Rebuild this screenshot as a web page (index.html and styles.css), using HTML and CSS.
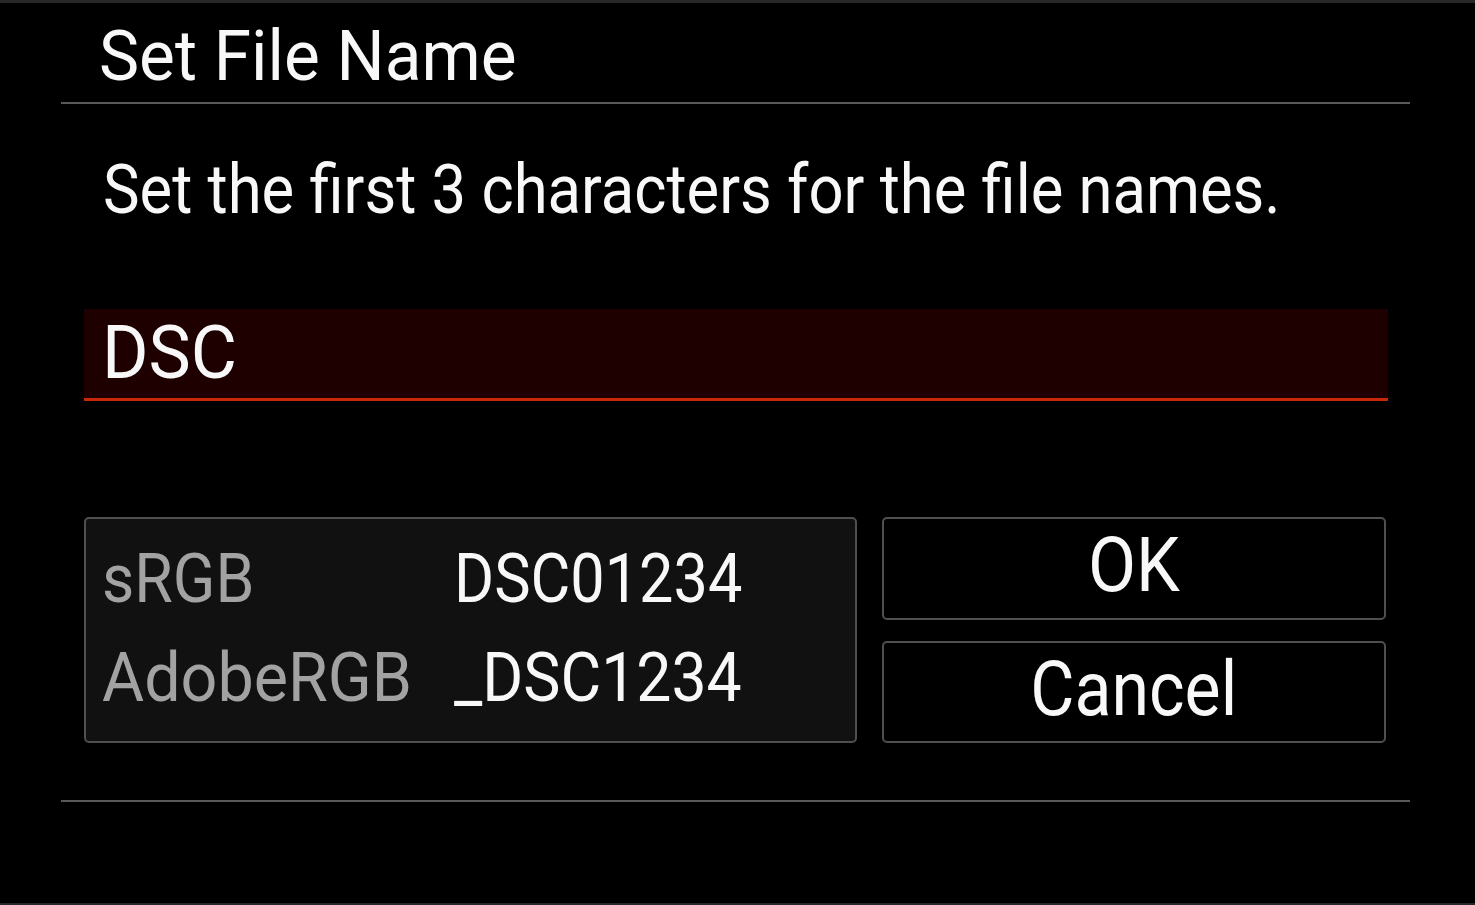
FILE: index.html
```html
<!DOCTYPE html>
<html lang="en">
<head>
<meta charset="utf-8">
<title>Set File Name</title>
<link rel="stylesheet" href="styles.css">
</head>
<body>
<div class="screen">
  <header class="header">
    <h1 class="title"><span class="cx">Set File Name</span></h1>
  </header>
  <p class="prompt"><span class="cx">Set the first 3 characters for the file names.</span></p>
  <div class="field"><span class="cx">DSC</span></div>
  <div class="row">
    <div class="info">
      <div class="label"><span class="cx">sRGB</span></div>
      <div class="value"><span class="cx num">DSC01234</span></div>
      <div class="label"><span class="cx wide">AdobeRGB</span></div>
      <div class="value"><span class="cx">_DSC1234</span></div>
    </div>
    <div class="buttons">
      <button class="btn"><span class="cc">OK</span></button>
      <button class="btn"><span class="cc narrow">Cancel</span></button>
    </div>
  </div>
  <div class="footer-rule"></div>
</div>
</body>
</html>
```
FILE: styles.css
```css
html, body {
  margin: 0;
  padding: 0;
  background: #000;
}
body {
  width: 1475px;
  height: 905px;
  overflow: hidden;
  font-family: Roboto, "Liberation Sans", sans-serif;
  color: #f8f8f8;
}
.screen {
  box-sizing: border-box;
  height: 905px;
  border-top: 3px solid #282828;
  border-bottom: 2px solid #282828;
  padding: 0 65px 0 61px;
  display: flex;
  flex-direction: column;
}
.cx {
  display: inline-block;
  transform: scaleX(0.92);
  transform-origin: left center;
  white-space: nowrap;
}
.cc {
  display: inline-block;
  transform: scaleX(0.92);
  transform-origin: center center;
  white-space: nowrap;
}
.header {
  padding: 18px 0 11px 38px;
  border-bottom: 2px solid #595959;
}
.title {
  margin: 0;
  font-size: 70px;
  line-height: 70px;
  font-weight: 400;
}
.title .cx {
  transform: scaleX(0.965);
}
.prompt {
  margin: 52px 0 0 0;
  padding-left: 42px;
  font-size: 68px;
  line-height: 68px;
}
.prompt .cx {
  transform: scaleX(0.905);
}
.field {
  margin: 85px 22px 0 23px;
  background: #1f0000;
  border-bottom: 3px solid #c8280a;
  padding: 7px 0 8px 18px;
  font-size: 74px;
  line-height: 74px;
}
.field .cx {
  transform: scaleX(0.96);
}
.row {
  margin: 116px 24px 0 23px;
  display: flex;
  gap: 25px;
  height: 226px;
}
.info {
  box-sizing: border-box;
  width: 773px;
  background: #111;
  border: 2px solid #4f4f4f;
  border-radius: 5px;
  padding: 11px 0 0 16px;
  display: grid;
  grid-template-columns: 352px auto;
  grid-auto-rows: 99px;
  font-size: 68px;
  line-height: 99px;
}
.label {
  color: #a2a2a2;
}
.value {
  color: #f8f8f8;
}
.info .wide {
  transform: scaleX(0.95);
}
.info .num {
  transform: scaleX(0.9);
}
.buttons {
  flex: 1;
  display: flex;
  flex-direction: column;
  gap: 21px;
}
.btn {
  flex: 1;
  box-sizing: border-box;
  background: #000;
  border: 2px solid #4f4f4f;
  border-radius: 5px;
  color: #f8f8f8;
  font-family: Roboto, "Liberation Sans", sans-serif;
  font-size: 76px;
  line-height: 76px;
  padding: 0 0 6px 0;
  display: flex;
  align-items: center;
  justify-content: center;
}
.btn .narrow {
  transform: scaleX(0.895);
}
.footer-rule {
  margin-top: 57px;
  height: 2px;
  background: #595959;
}
```
